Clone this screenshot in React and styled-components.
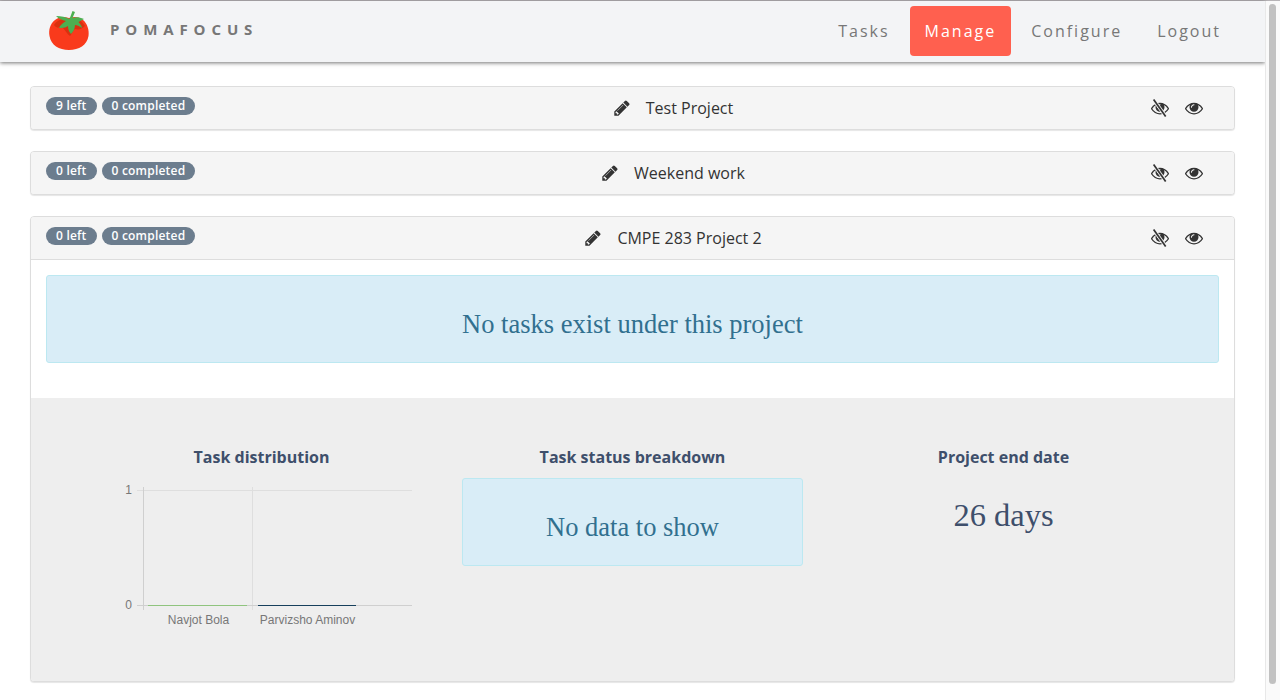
import React from 'react';
import styled, { createGlobalStyle } from 'styled-components';

const GlobalStyle = createGlobalStyle`
  html, body {
    margin: 0;
    height: 700px;
    overflow: hidden;
    background: #fff;
    font-family: "Open Sans", "Liberation Sans", sans-serif;
    color: #333;
  }
  * { box-sizing: border-box; }
`;

const Page = styled.div`
  display: flex;
  height: 700px;
  border-top: 1px solid #b7b4b7;
`;

const Content = styled.div`
  flex: 1;
  min-width: 0;
`;

const Scrollbar = styled.div`
  width: 15px;
  padding: 3px 4px 16px 3px;
  background: #fafafa;
  border-left: 1px solid #e8e8e8;
`;

const ScrollThumb = styled.div`
  height: 100%;
  background: #c1c1c1;
  border-radius: 4px;
`;

const Navbar = styled.nav`
  display: flex;
  justify-content: space-between;
  align-items: center;
  height: 61px;
  padding: 0 29px 0 48px;
  background: #f3f4f6;
  box-shadow: 0 1px 4px rgba(0, 0, 0, 0.55);
`;

const Brand = styled.div`
  display: flex;
  align-items: center;
  gap: 20px;
`;

const BrandName = styled.span`
  font-size: 15px;
  font-weight: 700;
  letter-spacing: 5.9px;
  color: #777;
  margin-top: -6px;
`;

const NavLinks = styled.div`
  display: flex;
  gap: 5px;
  margin-top: -1px;
`;

const NavLink = styled.a`
  display: block;
  height: 50px;
  line-height: 50px;
  padding: 0 15px;
  border-radius: 4px;
  font-size: 16px;
  letter-spacing: 2px;
  color: ${p => (p.$active ? '#fff' : '#777')};
  background: ${p => (p.$active ? '#ff604f' : 'transparent')};
`;

const Main = styled.main`
  padding: 24px 30px 0;
`;

const Card = styled.section`
  margin-bottom: 21px;
  background: #fff;
  border: 1px solid #ddd;
  border-radius: 4px;
  box-shadow: 0 1px 1px rgba(0, 0, 0, 0.1);
  overflow: hidden;
`;

const CardHeader = styled.header`
  display: grid;
  grid-template-columns: 220px 1fr 154px;
  align-items: center;
  height: 42px;
  padding-left: 15px;
  background: #f5f5f5;
`;

const Badges = styled.div`
  display: flex;
  gap: 5px;
  margin-bottom: 4px;
`;

const Badge = styled.span`
  height: 18px;
  line-height: 18px;
  padding: 0 10px;
  border-radius: 9px;
  background: #6c7d8e;
  color: #fff;
  font-size: 12px;
  font-weight: 600;
  letter-spacing: 0.2px;
  white-space: nowrap;
`;

const CardTitle = styled.div`
  display: flex;
  justify-content: center;
  align-items: center;
  gap: 15px;
  font-size: 16px;
  color: #333;
`;

const HeaderIcons = styled.div`
  display: flex;
  justify-content: flex-end;
  gap: 16px;
  padding-right: 31px;
  color: #333;
`;

const CardBody = styled.div`
  padding: 15px 15px 35px;
  border-top: 1px solid #ddd;
`;

const Alert = styled.div`
  display: flex;
  align-items: center;
  justify-content: center;
  height: 88px;
  padding-top: 10px;
  background: #d9edf7;
  border: 1px solid #bce8f1;
  border-radius: 3px;
  color: #31708f;
  font-family: "Liberation Serif", serif;
  font-size: 26.5px;
`;

const Stats = styled.div`
  display: grid;
  grid-template-columns: repeat(3, 371px);
  height: 283px;
  padding: 48px 45px 0;
  background: #eee;
`;

const StatColumn = styled.div`
  display: flex;
  flex-direction: column;
  align-items: stretch;
  padding: 0 15px;
  text-align: center;
`;

const StatTitle = styled.h4`
  margin: 0 0 10px;
  height: 22px;
  line-height: 22px;
  font-size: 16px;
  font-weight: 700;
  color: #3e4f6b;
`;

const StatValue = styled.div`
  margin-top: 12px;
  font-family: "Liberation Serif", serif;
  font-size: 32.5px;
  line-height: 50px;
  color: #3e4f6b;
`;

const Chart = styled.svg`
  display: block;
  margin-left: 27px;
`;

const IconSvg = styled.svg`
  display: block;
`;

const PENCIL = 'M491 1536l91-91-235-235-91 91v107h128v128h107zm523-928q0-22-22-22-10 0-17 7l-542 542q-7 7-7 17 0 22 22 22 10 0 17-7l542-542q7-7 7-17zm-54-192l416 416-832 832h-416v-416zm683 96q0 53-37 90l-166 166-416-416 166-165q36-38 90-38 53 0 91 38l235 234q37 39 37 91z';
const EYE = 'M1664 960q-152-236-381-353 61 104 61 225 0 185-131.5 316.5t-316.5 131.5-316.5-131.5-131.5-316.5q0-121 61-225-229 117-381 353 133 205 333.5 326.5t434.5 121.5 434.5-121.5 333.5-326.5zm-720-384q0-20-14-34t-34-14q-125 0-214.5 89.5t-89.5 214.5q0 20 14 34t34 14 34-14 14-34q0-86 61-147t147-61q20 0 34-14t14-34zm848 384q0 34-20 69-140 230-376.5 368.5t-499.5 138.5-499.5-139-376.5-368q-20-35-20-69t20-69q140-229 376.5-368t499.5-139 499.5 139 376.5 368q20 35 20 69z';

const PencilIcon = () => (
  <IconSvg width="18" height="18" viewBox="0 0 1792 1792" fill="currentColor">
    <path d={PENCIL} />
  </IconSvg>
);

const EyeIcon = () => (
  <IconSvg width="18" height="18" viewBox="0 0 1792 1792" fill="currentColor">
    <path d={EYE} />
  </IconSvg>
);

const EyeOffIcon = () => (
  <IconSvg width="18" height="18" viewBox="0 0 1792 1792" fill="currentColor">
    <path d={EYE} />
    <line x1="260" y1="60" x2="1460" y2="1740" stroke="#f5f5f5" strokeWidth="340" />
    <line x1="260" y1="60" x2="1460" y2="1740" stroke="currentColor" strokeWidth="170" />
  </IconSvg>
);

const Tomato = () => (
  <svg width="42" height="42" viewBox="0 0 42 42" style={{ display: 'block', marginTop: '-4px' }}>
    <path d="M21 9C15 7 11 8 7 11C2 15 .5 21 1.500 27C3 36 11 41 21 41C31 41 39 36 40.500 27C41.500 21 39 14 35 11C31 8 27 7 21 9Z" fill="#f93a1c" />
    <path d="M6 16C8 19 11 19 15 19C17 21 19 25 22 27C24 25 25 21 27 20C31 21 34 20 37 17C33 10 27 9 21 10C15 9 9 11 6 16Z" fill="#d9310f" />
    <path d="M24.500 2L27 3L24.500 9C28 8 31 8 36 10L30.500 13C32 15 34 17 34 19C31 17 29 16 27 16C27 20 25 23 23 25C21 23 20 20 20 17C17 19 14 19 11 19C12 16 15 14 18 12C14 11 11 10 8 7C13 7 18 8 21.500 10Z" fill="#4caf50" />
  </svg>
);

const TaskChart = () => (
  <Chart width="300" height="150" viewBox="118 478 300 150">
    <g stroke="#dedede" strokeWidth="1">
      <line x1="137" y1="490.500" x2="412" y2="490.500" />
      <line x1="252.500" y1="487" x2="252.500" y2="610" />
    </g>
    <g stroke="#cfcfcf" strokeWidth="1">
      <line x1="143.500" y1="487" x2="143.500" y2="610" />
      <line x1="137" y1="605.500" x2="412" y2="605.500" />
    </g>
    <line x1="148" y1="605.500" x2="247" y2="605.500" stroke="#8fc47e" />
    <line x1="258" y1="605.500" x2="356" y2="605.500" stroke="#17405c" />
    <g fill="#777" fontFamily="'Liberation Sans', sans-serif" fontSize="12">
      <text x="132" y="494" textAnchor="end">1</text>
      <text x="132" y="609" textAnchor="end">0</text>
      <text x="198.500" y="624" textAnchor="middle">Navjot Bola</text>
      <text x="307.500" y="624" textAnchor="middle">Parvizsho Aminov</text>
    </g>
  </Chart>
);

const ProjectHeader = ({ left, title }) => (
  <CardHeader>
    <Badges>
      <Badge>{left} left</Badge>
      <Badge>0 completed</Badge>
    </Badges>
    <CardTitle>
      <PencilIcon />
      <span>{title}</span>
    </CardTitle>
    <HeaderIcons>
      <EyeOffIcon />
      <EyeIcon />
    </HeaderIcons>
  </CardHeader>
);

export default function App() {
  return (
    <>
      <GlobalStyle />
      <Page>
        <Content>
          <Navbar>
            <Brand>
              <Tomato />
              <BrandName>POMAFOCUS</BrandName>
            </Brand>
            <NavLinks>
              <NavLink>Tasks</NavLink>
              <NavLink $active>Manage</NavLink>
              <NavLink>Configure</NavLink>
              <NavLink>Logout</NavLink>
            </NavLinks>
          </Navbar>
          <Main>
            <Card>
              <ProjectHeader left={9} title="Test Project" />
            </Card>
            <Card>
              <ProjectHeader left={0} title="Weekend work" />
            </Card>
            <Card>
              <ProjectHeader left={0} title="CMPE 283 Project 2" />
              <CardBody>
                <Alert>No tasks exist under this project</Alert>
              </CardBody>
              <Stats>
                <StatColumn>
                  <StatTitle>Task distribution</StatTitle>
                  <TaskChart />
                </StatColumn>
                <StatColumn>
                  <StatTitle>Task status breakdown</StatTitle>
                  <Alert>No data to show</Alert>
                </StatColumn>
                <StatColumn>
                  <StatTitle>Project end date</StatTitle>
                  <StatValue>26 days</StatValue>
                </StatColumn>
              </Stats>
            </Card>
          </Main>
        </Content>
        <Scrollbar>
          <ScrollThumb />
        </Scrollbar>
      </Page>
    </>
  );
}
